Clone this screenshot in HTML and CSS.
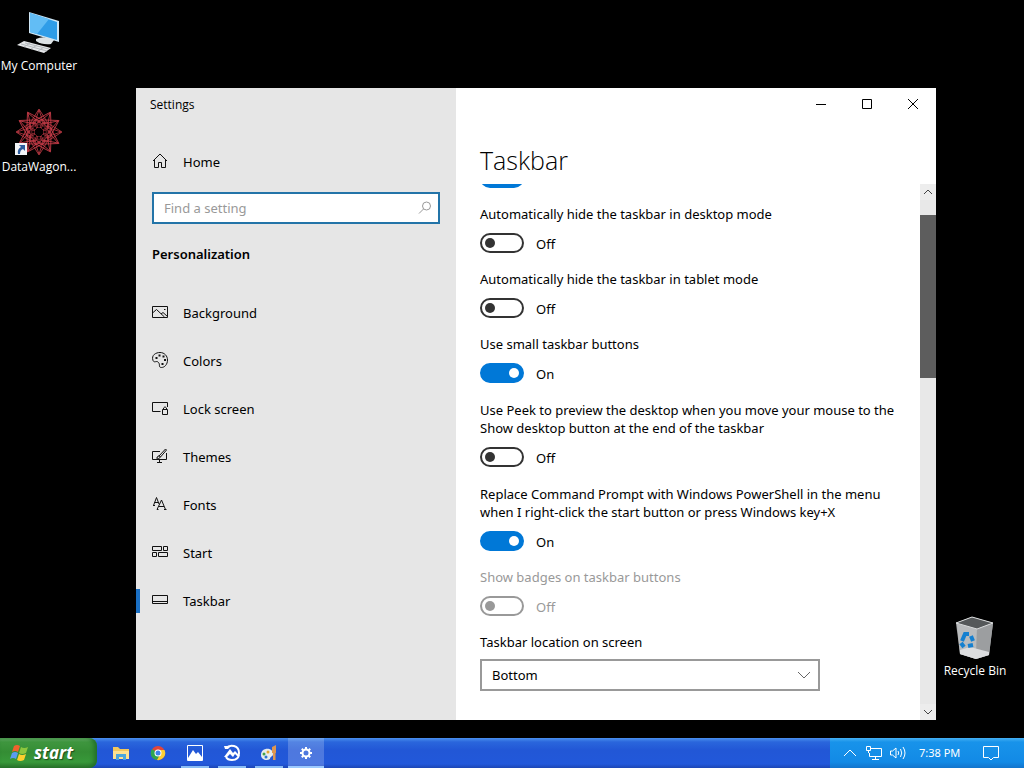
FILE: index.html
```
<!DOCTYPE html>
<html lang="en">
<head>
  <meta charset="UTF-8">
  <title>Settings</title>
  <link rel="stylesheet" href="styles.css">
</head>
<body>
  <main class="desktop">
    <!-- Desktop shortcuts -->
    <a href="#" class="shortcut my-computer">
      <svg width="44" height="44" viewBox="0 0 44 44">
        <path d="M12 1 L42 10 V31 L12 22 Z" fill="#cfe6f5"/>
        <path d="M13 2 L40 11 V29 L13 21 Z" fill="#2f9de8"/>
        <path d="M13 2 L32 8 L20 23 L13 21 Z" fill="#62bdf5"/>
        <path d="M19 28 Q27 24 37 29 L34 33 Q25 34 19 30 Z" fill="#dde3e6"/>
        <path d="M0 34 L7 30 L34 37 L27 42 Z" fill="#e6e8ea"/>
        <path d="M4 33 L30 40 M8 32 L32 38 M7 36 L13 32 M14 38 L20 34 M21 40 L27 36" stroke="#b4b9bd" fill="none"/>
      </svg>
      <span>My Computer</span>
    </a>
    <a href="#" class="shortcut datawagon">
      <svg width="48" height="48" viewBox="-24 -24 48 48">
        <defs>
          <path id="ray" d="M0 -23 L10 -7 L0 22 L-10 -7 Z"/>
          <circle id="loop" cx="0" cy="-8" r="4"/>
        </defs>
        <g fill="none" stroke="#c83c48" stroke-width=".8">
          <use href="#ray"/>
          <use href="#ray" transform="rotate(30)"/>
          <use href="#ray" transform="rotate(60)"/>
          <use href="#ray" transform="rotate(90)"/>
          <use href="#ray" transform="rotate(120)"/>
          <use href="#ray" transform="rotate(150)"/>
          <use href="#ray" transform="rotate(180)"/>
          <use href="#ray" transform="rotate(210)"/>
          <use href="#ray" transform="rotate(240)"/>
          <use href="#ray" transform="rotate(270)"/>
          <use href="#ray" transform="rotate(300)"/>
          <use href="#ray" transform="rotate(330)"/>
        </g>
        <circle r="9" fill="#000" opacity=".6"/>
        <g fill="none" stroke="#a8323c" stroke-width=".8">
          <use href="#loop"/>
          <use href="#loop" transform="rotate(45)"/>
          <use href="#loop" transform="rotate(90)"/>
          <use href="#loop" transform="rotate(135)"/>
          <use href="#loop" transform="rotate(180)"/>
          <use href="#loop" transform="rotate(225)"/>
          <use href="#loop" transform="rotate(270)"/>
          <use href="#loop" transform="rotate(315)"/>
        </g>
        <circle r="4" fill="#000"/>
        <rect x="-24" y="11" width="12" height="12" fill="#f2f4f7"/>
        <path d="M-20 13 H-14 V19 L-16 17 Q-19 18 -19 22 H-21 Q-22 17 -18 15 Z" fill="#2d5c9e"/>
      </svg>
      <span>DataWagon...</span>
    </a>
    <a href="#" class="shortcut recycle-bin">
      <svg width="40" height="44" viewBox="0 0 40 44">
        <path d="M1 7 L17 1 L38 7 L34 39 L21 43 L5 38 Z" fill="#a9abad"/>
        <path d="M2 8 L22 13 L21 43 L5 38 Z" fill="#b9bbbd"/>
        <path d="M22 13 L38 7 L34 39 L21 43 Z" fill="#9c9ea0"/>
        <path d="M1 7 L17 1 L38 7 L22 13 Z" fill="#55585a" stroke="#dadcdd"/>
        <path d="M5 34 L15 31 L34 36 L34 39 L21 43 L5 38 Z" fill="#dcdddf"/>
        <g fill="none" stroke="#1580d0" stroke-width="4">
          <path d="M7 25 L10 18 L14 18"/>
          <path d="M16 20 L18 25"/>
          <path d="M18 29 L13 30"/>
          <path d="M6 27 L9 31"/>
        </g>
      </svg>
      <span>Recycle Bin</span>
    </a>

    <!-- Settings window -->
    <section class="window">
      <aside class="sidebar">
        <div class="window-title">Settings</div>
        <a href="#" class="nav-item home">
          <svg class="icon" viewBox="0 0 16 16"><path d="M1 8 L8 1 L15 8 M2.500 7 V14.500 H6.500 V9.500 H9.500 V14.500 H13.500 V7"/></svg>
          Home
        </a>
        <div class="search">
          <input type="text" placeholder="Find a setting" aria-label="Find a setting">
          <svg class="icon" viewBox="0 0 16 16"><circle cx="9.500" cy="6" r="4"/><path d="M6.500 9 L2 13.500"/></svg>
        </div>
        <h2>Personalization</h2>
        <nav>
          <a href="#" class="nav-item">
            <svg class="icon" viewBox="0 0 16 16"><path d="M.5 2.500 H15.500 V13.500 H.5 Z M.5 9 L4.500 5.500 L12.500 13 M9 10 L11 8.500 L15.500 12.500"/><path d="M12 5.500 H13.500"/></svg>
            Background
          </a>
          <a href="#" class="nav-item">
            <svg class="icon" viewBox="0 0 16 16"><path d="M1 8.500 C-1 3 4 .5 8 .5 C12.500 .5 15.500 4 15.500 8 C15.500 12.500 12.500 15.500 9.500 15.500 C6 15.500 8.500 12.500 6.500 10.500 C4.500 8 2.500 11.500 1 8.500 Z"/><path d="M3.500 6 h2 M6.500 3.500 h2 M10.500 4.500 h2 M12 8 h2 M9.500 12 h2" stroke-width="2"/></svg>
            Colors
          </a>
          <a href="#" class="nav-item">
            <svg class="icon" viewBox="0 0 16 16"><path d="M8.500 11.500 H.5 V2.500 H15.500 V7 M10.500 9.500 H15.500 V14.500 H10.500 Z M11.500 9.500 V8 Q13 5.500 14.500 8 V9.500"/></svg>
            Lock screen
          </a>
          <a href="#" class="nav-item">
            <svg class="icon" viewBox="0 0 16 16"><path d="M8 3.500 H.5 V11.500 H14.500 V5 M7.500 11.500 V14 M5 14.500 H10 M4.500 10 Q6 9.500 6 8 L8 8 Q9 10 6.500 10.500 Z M7 8 L13.500 1 L14.500 2 L8.500 9"/></svg>
            Themes
          </a>
          <a href="#" class="nav-item">
            <svg class="icon" viewBox="0 0 16 16"><path d="M1.500 9.500 L4.500 1.500 L7 8 M2.500 6.500 H6.500 M5 13.500 L9.500 4 L13.500 13.500 M7 10.500 H12 M12 13.500 H14.500 M5 13.500 H6.500 M1 9.500 H3"/></svg>
            Fonts
          </a>
          <a href="#" class="nav-item">
            <svg class="icon" viewBox="0 0 16 16"><path d="M.5 2.500 H9.500 V6.500 H.5 Z M11.500 2.500 H15.500 V6.500 H11.500 Z M.5 8.500 H4.500 V12.500 H.5 Z M6.500 8.500 H15.500 V12.500 H6.500 Z"/></svg>
            Start
          </a>
          <a href="#" class="nav-item active">
            <svg class="icon" viewBox="0 0 16 16"><path d="M.5 3.500 H15.500 V11.500 H.5 Z M.5 9.500 H15.500"/></svg>
            Taskbar
          </a>
        </nav>
      </aside>

      <div class="content">
        <div class="caption">
          <button type="button" aria-label="Minimize"><svg viewBox="0 0 12 12"><path d="M1 6.500 H11"/></svg></button>
          <button type="button" aria-label="Maximize"><svg viewBox="0 0 12 12"><path d="M1.500 1.500 H10.500 V10.500 H1.500 Z"/></svg></button>
          <button type="button" aria-label="Close"><svg viewBox="0 0 12 12"><path d="M1 1 L11 11 M11 1 L1 11"/></svg></button>
        </div>
        <h1>Taskbar</h1>
        <div class="scroll-area">
          <form class="options">
            <div class="option scrolled">
              <div class="toggle"><input type="checkbox" aria-label="Lock the taskbar" checked></div>
            </div>
            <div class="option">
              <label for="hideDesktop">Automatically hide the taskbar in desktop mode</label>
              <div class="toggle"><input type="checkbox" id="hideDesktop"><span>Off</span></div>
            </div>
            <div class="option">
              <label for="hideTablet">Automatically hide the taskbar in tablet mode</label>
              <div class="toggle"><input type="checkbox" id="hideTablet"><span>Off</span></div>
            </div>
            <div class="option">
              <label for="smallButtons">Use small taskbar buttons</label>
              <div class="toggle"><input type="checkbox" id="smallButtons" checked><span>On</span></div>
            </div>
            <div class="option long">
              <label for="peek">Use Peek to preview the desktop when you move your mouse to the Show desktop button at the end of the taskbar</label>
              <div class="toggle"><input type="checkbox" id="peek"><span>Off</span></div>
            </div>
            <div class="option long">
              <label for="powershell">Replace Command Prompt with Windows PowerShell in the menu when I right-click the start button or press Windows key+X</label>
              <div class="toggle"><input type="checkbox" id="powershell" checked><span>On</span></div>
            </div>
            <div class="option disabled">
              <label for="badges">Show badges on taskbar buttons</label>
              <div class="toggle"><input type="checkbox" id="badges" disabled><span>Off</span></div>
            </div>
            <div class="option location">
              <label for="location">Taskbar location on screen</label>
              <div class="dropdown">
                <select id="location">
                  <option>Bottom</option>
                  <option>Left</option>
                  <option>Top</option>
                  <option>Right</option>
                </select>
                <svg viewBox="0 0 12 12"><path d="M0 3 L6 9 L12 3"/></svg>
              </div>
            </div>
          </form>
          <div class="scrollbar">
            <button type="button" aria-label="Scroll up"><svg viewBox="0 0 8 8"><path d="M0 6 L4 2 L8 6"/></svg></button>
            <div class="track"><div class="thumb"></div></div>
            <button type="button" aria-label="Scroll down"><svg viewBox="0 0 8 8"><path d="M0 2 L4 6 L8 2"/></svg></button>
          </div>
        </div>
      </div>
    </section>
  </main>

  <footer class="taskbar">
    <button type="button" class="start">
      <svg width="20" height="18" viewBox="0 0 20 18">
        <path d="M4 2 Q7 0 10 2 L8 8 Q5 6 2 8 Z" fill="#f0622d"/>
        <path d="M11 3 Q14 5 18 3 L16 9 Q12 11 9 9 Z" fill="#8cc63e"/>
        <path d="M2 9 Q5 7 8 9 L6 15 Q3 13 0 15 Z" fill="#5a9cf0"/>
        <path d="M9 10 Q12 12 16 10 L14 16 Q10 18 7 16 Z" fill="#fccf2e"/>
      </svg>
      start
    </button>
    <div class="tasks">
      <button type="button" aria-label="File Explorer">
        <svg viewBox="0 0 18 18"><path d="M1 3 H6 L8 5 H17 V15 H1 Z" fill="#f2c85c"/><path d="M1 7 H17 V15 H1 Z" fill="#fde18f"/><path d="M4 10 H14 V16 H11 V13 H7 V16 H4 Z" fill="#4ba6dc"/></svg>
      </button>
      <button type="button" aria-label="Chrome">
        <svg viewBox="0 0 18 18"><circle cx="9" cy="9" r="7" fill="#e2463a"/><path d="M9 9 L3 5 A7 7 0 0 0 8 16 L11 11 Z" fill="#2fa552"/><path d="M9 6 H15.500 A7 7 0 0 1 8 16 L12 9 Z" fill="#fbce33"/><circle cx="9" cy="9" r="3.500" fill="#fff"/><circle cx="9" cy="9" r="2.500" fill="#3f82ec"/></svg>
      </button>
      <button type="button" class="open" aria-label="Photos">
        <svg viewBox="0 0 18 18"><path d="M1.500 1.500 H16.500 V16.500 H1.500 Z" fill="none" stroke="#fff"/><path d="M2 14 L7 6 L10 10 L12 8 L16 13 V16 H2 Z" fill="#fff"/></svg>
      </button>
      <button type="button" class="open" aria-label="Gallery">
        <svg viewBox="0 0 18 18"><path d="M3 4 C7 0 16 1 16 9 C16 14 13 16 9 16 C6 16 4 15 3 13" fill="none" stroke="#fff" stroke-width="2"/><path d="M1 13 L7 5 L10 9 L12 7 L17 12 H14 L12 10 L10 13 L7 10 L4 13 Z" fill="#fff"/><path d="M1 2 H8 L5 5 H2 Z" fill="#fff"/></svg>
      </button>
      <button type="button" class="open" aria-label="Paint">
        <svg viewBox="0 0 18 18"><path d="M1 11 C1 3 13 3 13 10 C13 13 10 12 10 15 C7 17 1 16 1 11 Z" fill="#e6ecee"/><circle cx="4" cy="10" r="1.500" fill="#43a348"/><circle cx="8" cy="8" r="1.500" fill="#e5a72f"/><circle cx="6" cy="13" r="1.500" fill="#2b77d0"/><path d="M12 3 L16 1 V9 H15.500 V16 H13 V9 H12 Z" fill="#dd9752"/></svg>
      </button>
      <button type="button" class="open current" aria-label="Settings">
        <svg viewBox="0 0 18 18"><g fill="none" stroke="#fff" stroke-width="2"><circle cx="9" cy="9" r="3.500"/><path d="M9 3 V5 M9 13 V15 M3 9 H5 M13 9 H15 M4.800 4.800 L6.200 6.200 M11.800 11.800 L13.200 13.200 M4.800 13.200 L6.200 11.800 M11.800 6.200 L13.200 4.800"/></g></svg>
      </button>
    </div>
    <div class="tray">
      <svg viewBox="0 0 18 18"><path d="M3 12 L9 6 L15 12"/></svg>
      <svg viewBox="0 0 18 18"><path d="M6 4.500 H16.500 V12.500 H4.500 V9 M10.500 12.500 V15.500 M7 15.500 H14 M1.500 2.500 H5.500 V6.500 H1.500 Z M3.500 6.500 V9"/></svg>
      <svg viewBox="0 0 18 18"><path d="M1.500 7 H3.500 L7 4 V14 L3.500 11 H1.500 Z M9 7 Q10.500 9 9 11 M11.500 5 Q14 9 11.500 13 M14 3 Q18 9 14 15"/></svg>
      <time>7:38 PM</time>
      <button type="button" aria-label="Notifications">
        <svg viewBox="0 0 18 18"><path d="M1.500 2.500 H16.500 V13.500 H11.500 L9 16 L6.500 13.500 H1.500 Z"/></svg>
      </button>
    </div>
  </footer>
</body>
</html>
```
FILE: styles.css
```
* { box-sizing: border-box; }
body {
  margin: 0;
  height: 100vh;
  display: flex;
  flex-direction: column;
  overflow: hidden;
  background: #000;
  color: #000;
  font: 13px/18px "Noto Sans", "Open Sans", sans-serif;
}
a { color: inherit; text-decoration: none; }
button { padding: 0; border: none; background: none; font: inherit; color: inherit; }
svg { display: block; flex: none; }

/* Desktop */
.desktop { position: relative; flex: 1; min-height: 0; }
.shortcut {
  position: absolute;
  width: 78px;
  display: flex;
  flex-direction: column;
  align-items: center;
  gap: 2px;
  color: #fff;
  font-family: "Open Sans", sans-serif;
  font-size: 12px;
  white-space: nowrap;
}
.my-computer { left: 0; top: 11px; }
.datawagon { left: 0; top: 108px; }
.recycle-bin { right: 10px; top: 616px; }

/* Window */
.window {
  position: absolute;
  inset: 88px 88px 18px 136px;
  display: flex;
  background: #fff;
}
.sidebar { width: 320px; flex: none; background: #e6e6e6; }
.window-title { padding: 8px 14px; font-family: "Open Sans", sans-serif; font-size: 12px; }
.icon { width: 16px; height: 16px; fill: none; stroke: #111; }
.nav-item {
  display: flex;
  align-items: center;
  gap: 15px;
  height: 48px;
  padding-left: 16px;
}
.nav-item .icon { margin-bottom: 2px; }
.home { margin-top: 16px; }
.nav-item.active { padding-left: 12px; }
.nav-item.active::before { content: ""; width: 4px; height: 24px; margin: 0 -3px 0 -12px; background: #1a6fc4; }
.search {
  display: flex;
  align-items: center;
  height: 32px;
  margin: 6px 16px 0;
  padding: 0 5px 0 10px;
  border: 2px solid #2374a8;
  background: #fff;
}
.search input { flex: 1; min-width: 0; padding: 0; border: none; outline: none; font: inherit; }
.search input::placeholder { color: #999; opacity: 1; }
.search .icon { stroke: #999; }
h2 { margin: 21px 16px 26px; font-size: 13px; line-height: 18px; font-weight: 600; }

.content { flex: 1; min-width: 0; display: flex; flex-direction: column; }
.caption { display: flex; justify-content: flex-end; }
.caption button { width: 46px; height: 32px; display: flex; align-items: center; justify-content: center; }
.caption svg { width: 12px; height: 12px; fill: none; stroke: #000; }
h1 { margin: 24px 24px 8px; font-family: "Open Sans", sans-serif; font-size: 25px; line-height: 32px; font-weight: 300; }

.scroll-area { flex: 1; min-height: 0; display: flex; overflow: hidden; }
.options { flex: 1; min-width: 0; padding: 0 16px 0 24px; display: flex; flex-direction: column; gap: 17px; }
.option { display: flex; flex-direction: column; gap: 10px; }
.option.scrolled { margin-top: -16px; }
.option.long { padding-top: 1px; }
.option.location { gap: 8px; }
.option.disabled { color: #999; }
.toggle { display: flex; align-items: center; gap: 12px; height: 20px; }
.toggle span { padding-top: 2px; }
.toggle input {
  appearance: none;
  width: 44px;
  height: 20px;
  margin: 0;
  padding: 3px;
  display: flex;
  border: 2px solid #333;
  border-radius: 10px;
}
.toggle input::before { content: ""; width: 10px; height: 10px; border-radius: 50%; background: #333; }
.toggle input:checked { justify-content: flex-end; border-color: #0078d7; background: #0078d7; }
.toggle input:checked::before { background: #fff; }
.toggle input:disabled { border-color: #999; }
.toggle input:disabled::before { background: #999; }
.dropdown { display: grid; align-items: center; width: 340px; max-width: 100%; }
.dropdown select {
  grid-area: 1 / 1;
  appearance: none;
  height: 32px;
  padding: 0 10px;
  border: 2px solid #999;
  border-radius: 0;
  background: #fff;
  color: #000;
  font: inherit;
}
.dropdown svg { grid-area: 1 / 1; justify-self: end; width: 12px; height: 12px; margin-right: 10px; fill: none; stroke: #666; pointer-events: none; }

.scrollbar { width: 16px; display: flex; flex-direction: column; background: #e8e8e8; }
.scrollbar button { height: 16px; display: flex; align-items: center; justify-content: center; background: #ededed; }
.scrollbar svg { width: 8px; height: 8px; fill: none; stroke: #444; }
.track { flex: 1; padding-top: 15px; }
.thumb { height: 163px; background: #5d5d5d; }

/* Taskbar */
.taskbar {
  height: 30px;
  display: flex;
  background: linear-gradient(#4a90ee 0, #2a66dc 4px, #2257d6 12px, #2258da 26px, #1c46b4);
}
.start {
  width: 97px;
  display: flex;
  align-items: center;
  gap: 4px;
  padding-left: 10px;
  border-radius: 0 8px 8px 0;
  background: linear-gradient(#6cb26c 0, #3f963f 4px, #348d34 14px, #38993a 24px, #2a732a);
  box-shadow: inset -3px 0 4px #22702a;
  color: #fff;
  font-family: "Open Sans", sans-serif;
  font-size: 17px;
  font-style: italic;
  font-weight: 700;
  text-shadow: 1px 1px 1px #1b4a1b;
}
.tasks { flex: 1; display: flex; gap: 1px; padding-left: 6px; }
.tasks button { width: 36px; display: flex; align-items: center; justify-content: center; }
.tasks svg { width: 18px; height: 18px; }
.tasks .open { background: linear-gradient(#8abdf5, #8abdf5) center bottom / 28px 2px no-repeat; }
.tasks .current { background: linear-gradient(transparent 28px, #9ccaff 28px), rgba(255, 255, 255, .2); }
.tray {
  width: 194px;
  display: flex;
  align-items: center;
  gap: 6px;
  padding-left: 11px;
  background: linear-gradient(#45b0f4 0, #1893ea 4px, #128ae6 24px, #1274cc);
  color: #fff;
  font-size: 11px;
}
.tray svg { width: 18px; height: 18px; fill: none; stroke: #fff; }
.tray time { flex: 1; margin-left: 6px; white-space: nowrap; }
.tray button { margin-right: 24px; }
```
